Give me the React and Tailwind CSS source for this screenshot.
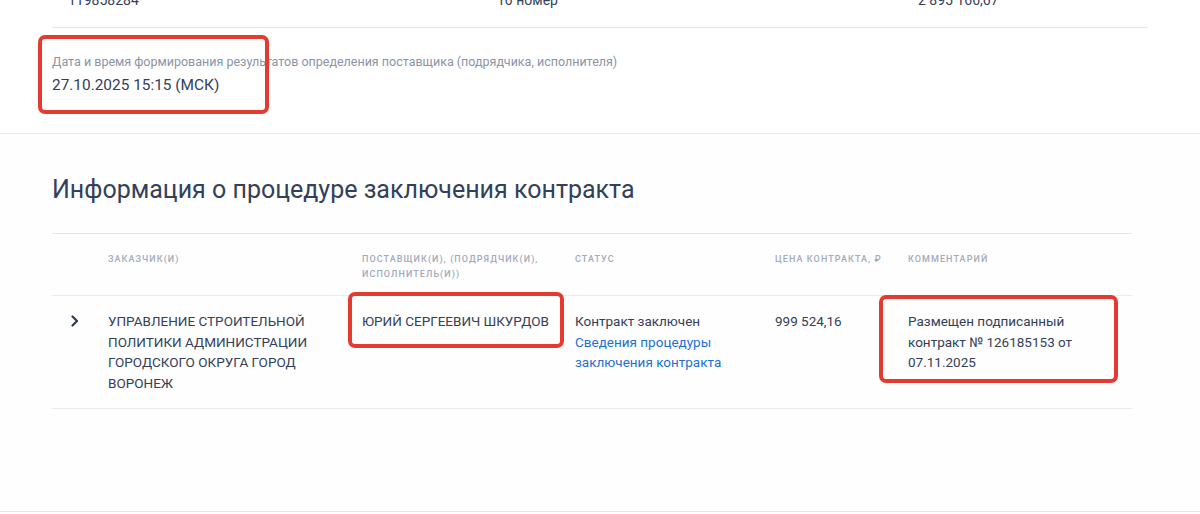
import React from "react";

const F = { fontFamily: "Roboto, 'Noto Sans', sans-serif" };

function Chevron() {
  return (
    <svg width="10" height="12" viewBox="0 0 10 12" className="mt-[4px]">
      <path d="M2.5 1.5 L7 6 L2.5 10.5" fill="none" stroke="#2f3a4f" strokeWidth="2.2" strokeLinecap="round" strokeLinejoin="round" />
    </svg>
  );
}

export default function App() {
  return (
    <div style={F} className="w-[1200px] h-[514px] overflow-hidden bg-white text-[#334059]">
      {/* top partial row */}
      <div className="mx-[52px] border-b border-[#e4e6ef]">
        <div className="flex text-[14px] leading-[20px] mt-[-10px] pb-[17px]">
          <div className="w-[445px] pl-[16px]">119858284</div>
          <div className="w-[421px]">10 номер</div>
          <div>2 895 166,67</div>
        </div>
      </div>

      {/* date block */}
      <div className="relative border-b border-[#ebebf3] pl-[52px] pt-[26px] pb-[38px]">
        <div className="text-[12.5px] leading-[16px] text-[#8a94a8]">
          Дата и время формирования результатов определения поставщика (подрядчика, исполнителя)
        </div>
        <div className="text-[15.4px] leading-[20px] mt-[5px]">27.10.2025 15:15 (МСК)</div>
        <div className="absolute left-[38px] top-[7px] w-[231px] h-[79px] border-[4px] border-[#e53a2f] rounded-[7px]" />
      </div>

      {/* contract section */}
      <div className="bg-[#fefefe] h-[378px] border-b border-[#e6e6f0]">
        <div className="px-[52px] pt-[41px]">
          <h2 className="text-[25px] leading-[30px] font-normal text-[#334059]">
            Информация о процедуре заключения контракта
          </h2>
          <div className="mt-[28px] border-t border-[#e4e6ef] w-[1080px]">
            <div className="flex text-[9px] leading-[15px] tracking-[0.12em] font-medium text-[#a2aabb] pt-[18px] pb-[13px] border-b border-[#e9eaf1]">
              <div className="w-[56px]" />
              <div className="w-[254px]">ЗАКАЗЧИК(И)</div>
              <div className="w-[213px] pr-[10px]">ПОСТАВЩИК(И), (ПОДРЯДЧИК(И), ИСПОЛНИТЕЛЬ(И))</div>
              <div className="w-[200px]">СТАТУС</div>
              <div className="w-[133px]">ЦЕНА КОНТРАКТА, ₽</div>
              <div className="w-[224px]">КОММЕНТАРИЙ</div>
            </div>
            <div className="relative flex text-[13.5px] leading-[20.5px] text-[#334059] pt-[15px] pb-[15px] border-b border-[#e9eaf1]">
              <div className="w-[56px] pl-[18px]"><Chevron /></div>
              <div className="w-[254px] pr-[40px]">
                УПРАВЛЕНИЕ СТРОИТЕЛЬНОЙ ПОЛИТИКИ АДМИНИСТРАЦИИ ГОРОДСКОГО ОКРУГА ГОРОД ВОРОНЕЖ
              </div>
              <div className="w-[213px]">ЮРИЙ СЕРГЕЕВИЧ ШКУРДОВ</div>
              <div className="w-[200px] pr-[40px]">
                <div>Контракт заключен</div>
                <div className="text-[#1f6fd6]">Сведения процедуры заключения контракта</div>
              </div>
              <div className="w-[133px]">999 524,16</div>
              <div className="w-[224px] pr-[20px]">Размещен подписанный контракт № 126185153 от 07.11.2025</div>
              <div className="absolute left-[296px] top-[-4px] w-[216px] h-[56px] border-[4px] border-[#e53a2f] rounded-[7px]" />
              <div className="absolute left-[827px] top-[-1px] w-[239px] h-[88px] border-[4px] border-[#e53a2f] rounded-[7px]" />
            </div>
          </div>
        </div>
      </div>
    </div>
  );
}
